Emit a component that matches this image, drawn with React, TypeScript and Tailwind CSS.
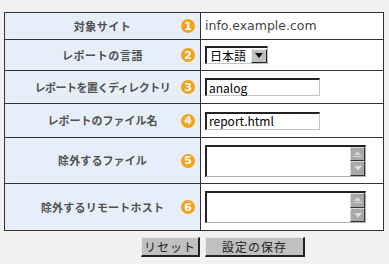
import React from "react";

const jp = { fontFamily: '"Noto Sans CJK JP", "Noto Sans", sans-serif' };

function Badge({ n }: { n: number }) {
  return (
    <span
      className="absolute right-[5px] top-1/2 -translate-y-1/2 w-[14px] h-[14px] rounded-full bg-[#f5a21c] text-white text-[11px] font-bold leading-none flex items-center justify-center"
      style={{ fontFamily: '"DejaVu Sans", sans-serif' }}
    >
      {n}
    </span>
  );
}

function Row({
  label,
  n,
  h,
  first,
  track,
  children,
}: {
  label: string;
  n: number;
  h: string;
  first?: boolean;
  track: string;
  children: React.ReactNode;
}) {
  return (
    <div className={`flex ${first ? "" : "border-t border-[#333]"} ${h}`}>
      <div className="relative w-[196px] shrink-0 border-r border-[#333] bg-[#e6eff9] flex items-center justify-center">
        <span className={`text-[11px] font-bold text-[#505050] ${track}`} style={jp}>
          {label}
        </span>
        <Badge n={n} />
      </div>
      <div className="flex-1 bg-white flex items-center pl-[4px]">{children}</div>
    </div>
  );
}

function TextInput({ value }: { value: string }) {
  return (
    <div
      className="w-[115px] h-[18px] bg-white border-t-2 border-l-2 border-r border-b border-t-[#222] border-l-[#222] border-r-[#c4c4c4] border-b-[#c4c4c4] flex items-center pl-[2px] text-[12px] text-black leading-none"
      style={jp}
    >
      {value}
    </div>
  );
}

function TextArea() {
  return (
    <div className="w-[161px] h-[32px] bg-white border-t-2 border-l-2 border-r border-b border-t-[#222] border-l-[#222] border-r-[#b0b0b0] border-b-[#b0b0b0] flex justify-end">
      <div className="flex flex-col">
        <div className="w-[15px] h-[15px] bg-[#a8a8a8] border border-t-[#d8d8d8] border-l-[#d8d8d8] border-r-[#333] border-b-[#333] flex flex-col items-center justify-center">
          <svg width="9" height="6" viewBox="0 0 9 6">
            <polygon points="4.5,0 8,4 1,4" fill="#d8d8d8" />
            <rect x="0" y="5" width="9" height="1" fill="#d8d8d8" />
          </svg>
        </div>
        <div className="w-[15px] h-[15px] bg-[#a8a8a8] border border-t-[#d8d8d8] border-l-[#d8d8d8] border-r-[#333] border-b-[#333] flex items-center justify-center">
          <svg width="9" height="6" viewBox="0 0 9 6">
            <polygon points="1,1 8,1 4.5,5" fill="#d8d8d8" />
            <line x1="8" y1="1" x2="4.5" y2="5" stroke="#ffffff" strokeWidth="1" />
          </svg>
        </div>
      </div>
    </div>
  );
}

function Select() {
  return (
    <div className="w-[63px] h-[18px] bg-white border-t-2 border-l-2 border-r border-b border-t-[#222] border-l-[#222] border-r-[#c4c4c4] border-b-[#c4c4c4] flex items-center justify-between">
      <span className="text-[12px] text-black leading-none pl-[3px]" style={jp}>
        日本語
      </span>
      <div className="w-[16px] h-[14px] bg-[#c0c0c0] border border-t-[#eee] border-l-[#eee] border-r-[#222] border-b-[#222] flex items-center justify-center">
        <svg width="8" height="5" viewBox="0 0 8 5">
          <polygon points="0,0 8,0 4,5" fill="#111" />
        </svg>
      </div>
    </div>
  );
}

function Button({ label, w }: { label: string; w: string }) {
  return (
    <div
      className={`${w} h-[20px] bg-[#c0c0c0] border-t border-l border-r-2 border-b-2 border-t-[#e8e8e8] border-l-[#e8e8e8] border-r-[#222] border-b-[#222] flex items-center justify-center text-[12px] text-[#222] leading-none tracking-[1px]`}
      style={jp}
    >
      {label}
    </div>
  );
}

export default function App() {
  return (
    <div className="w-[389px] h-[264px] bg-[#f1f1f1] pt-[12px] pl-[4px]">
      <div className="w-[380px] border border-[#333]">
        <Row label="対象サイト" n={1} h="h-[26px]" first track="tracking-[0.5px]">
          <span
            className="text-[12.5px] text-[#444] leading-none"
            style={{ fontFamily: '"DejaVu Sans", sans-serif' }}
          >
            info.example.com
          </span>
        </Row>
        <Row label="レポートの言語" n={2} h="h-[31px]" track="tracking-[0.6px]">
          <Select />
        </Row>
        <Row label="レポートを置くディレクトリ" n={3} h="h-[33px]" track="tracking-[-0.5px]">
          <TextInput value="analog" />
        </Row>
        <Row label="レポートのファイル名" n={4} h="h-[34px]" track="tracking-[0px]">
          <TextInput value="report.html" />
        </Row>
        <Row label="除外するファイル" n={5} h="h-[46px]" track="tracking-[0.1px]">
          <TextArea />
        </Row>
        <Row label="除外するリモートホスト" n={6} h="h-[47px]" track="tracking-[0.2px]">
          <TextArea />
        </Row>
      </div>
      <div className="flex mt-[6px]">
        <div className="w-[196px] flex justify-end">
          <Button label="リセット" w="w-[59px]" />
        </div>
        <div className="ml-[5px]">
          <Button label="設定の保存" w="w-[100px]" />
        </div>
      </div>
    </div>
  );
}
